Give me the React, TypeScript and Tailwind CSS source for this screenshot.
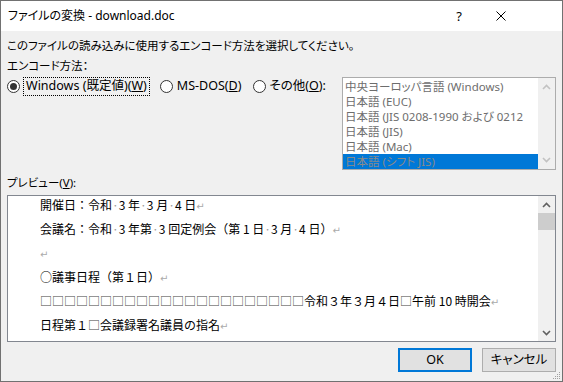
import React from 'react';

const ui = "font-['Noto_Sans','Noto_Sans_CJK_JP',sans-serif] [font-feature-settings:'palt']";

const Radio = ({ checked }: { checked?: boolean }) => (
  <span className="w-[13px] h-[13px] rounded-full border border-[#333] bg-white flex items-center justify-center shrink-0">
    {checked && <span className="w-[7px] h-[7px] rounded-full bg-[#333]"></span>}
  </span>
);

const Arrow = ({ up, color }: { up?: boolean; color: string }) => (
  <svg width="9" height="6" viewBox="0 0 9 6">
    <path d={up ? 'M1 5 L4.5 1.5 L8 5' : 'M1 1 L4.5 4.5 L8 1'} fill="none" stroke={color} strokeWidth="1.6" />
  </svg>
);

const encodings = [
  '中央ヨーロッパ言語 (Windows)',
  '日本語 (EUC)',
  '日本語 (JIS 0208-1990 および 0212',
  '日本語 (JIS)',
  '日本語 (Mac)',
  '日本語 (シフト JIS)',
];

const Dot = () => <span className="text-[#999]">·</span>;
const Ret = () => <span className="text-[#aaa] text-[10px] leading-none font-['DejaVu_Sans',sans-serif]">↵</span>;

export default function App() {
  return (
    <div className={`w-[563px] h-[382px] border border-[#717171] bg-[#f0f0f0] flex flex-col relative text-[12px] text-black ${ui}`}>
      {/* title bar */}
      <div className="h-[30px] bg-white flex items-center pl-[7px] shrink-0">
        <span className="text-[12px] leading-none">ファイルの変換 - download.doc</span>
        <span className="ml-auto mr-[34px] text-[13px] leading-none">?</span>
        <svg width="10" height="10" viewBox="0 0 10 10" className="mr-[56px]">
          <path d="M0.5 0.5 L9.5 9.5 M9.5 0.5 L0.5 9.5" stroke="#000" strokeWidth="1" />
        </svg>
      </div>

      <div className="px-[6px] flex flex-col">
        <div className="h-[20px] mt-[5px] flex items-center text-[11.5px]">このファイルの読み込みに使用するエンコード方法を選択してください。</div>
        <div className="h-[20px] flex items-center text-[11.5px]">エンコード方法：</div>

        <div className="flex items-start mt-[1px]">
          <div className="flex items-center h-[19px]">
            <Radio checked />
            <span className="ml-[3px] h-[19px] px-[2px] flex items-center border border-dotted border-black text-[12.5px]">
              Windows (既定値)(<u>W</u>)
            </span>
            <span className="ml-[10px]"><Radio /></span>
            <span className="ml-[4px] text-[12.5px]">MS-DOS(<u>D</u>)</span>
            <span className="ml-[12px]"><Radio /></span>
            <span className="ml-[3px] text-[12.5px]">その他(<u>O</u>):</span>
          </div>

          <div className="ml-auto w-[214px] h-[93px] border border-[#acacac] bg-white flex overflow-hidden">
            <div className="flex-1 flex flex-col overflow-hidden pt-[1px]">
              {encodings.map((e, i) => (
                <div
                  key={i}
                  className={`h-[15px] leading-[13px] flex items-center pl-[2px] whitespace-nowrap text-[11.5px] ${i === 5 ? 'bg-[#0078d7] text-[#8a8a8a]' : 'text-[#6d6d6d]'}`}
                >
                  {e}
                </div>
              ))}
            </div>
            <div className="w-[17px] bg-[#f0f0f0] flex flex-col items-center justify-between py-[6px]">
              <Arrow up color="#c2c2c2" />
              <Arrow color="#c2c2c2" />
            </div>
          </div>
        </div>

        <div className="h-[16px] mt-[5px] flex items-center text-[11.5px]">プレビュー(<u>V</u>):</div>

        <div className="mt-[4px] h-[147px] border border-[#828790] bg-white flex overflow-hidden">
          <div className="flex-1 pl-[32px] -mt-[3px] leading-[24px] whitespace-nowrap font-['Noto_Sans_CJK_JP',sans-serif] [font-feature-settings:normal] text-[12px]">
            <div>開催日：令和<Dot />3 年<Dot />3 月<Dot />4 日<Ret /></div>
            <div>会議名：令和<Dot />3 年第<Dot />3 回定例会（第 1 日<Dot />3 月<Dot />4 日）<Ret /></div>
            <div><Ret /></div>
            <div>○議事日程（第１日）<Ret /></div>
            <div>
              <span className="text-[#444]">□□□□□□□□□□□□□□□□□□□□□□</span>令和３年３月４日<span className="text-[#444]">□</span>午前 10 時開会<Ret />
            </div>
            <div>日程第１<span className="text-[#444]">□</span>会議録署名議員の指名<Ret /></div>
          </div>
          <div className="w-[17px] bg-[#f0f0f0] flex flex-col items-center">
            <div className="h-[17px] flex items-center justify-center"><Arrow up color="#606060" /></div>
            <div className="w-[17px] h-[17px] bg-[#cdcdcd]"></div>
            <div className="flex-1"></div>
            <div className="h-[17px] flex items-center justify-center"><Arrow color="#606060" /></div>
          </div>
        </div>

        <div className="flex justify-end gap-[10px] mt-[6px]">
          <button className="w-[74px] h-[24px] border-2 border-[#0078d7] bg-[#e1e1e1] text-[12.5px] flex items-center justify-center">OK</button>
          <button className="w-[74px] h-[24px] border border-[#adadad] bg-[#e1e1e1] text-[12.5px] flex items-center justify-center">キャンセル</button>
        </div>
      </div>

      <svg width="10" height="10" viewBox="0 0 10 10" className="absolute right-[1px] bottom-[1px]">
        <g fill="#a0a0a0">
          <rect x="8" y="2" width="1" height="1" />
          <rect x="6" y="4" width="1" height="1" />
          <rect x="8" y="4" width="1" height="1" />
          <rect x="4" y="6" width="1" height="1" />
          <rect x="6" y="6" width="1" height="1" />
          <rect x="8" y="6" width="1" height="1" />
          <rect x="2" y="8" width="1" height="1" />
          <rect x="4" y="8" width="1" height="1" />
          <rect x="6" y="8" width="1" height="1" />
          <rect x="8" y="8" width="1" height="1" />
        </g>
      </svg>
    </div>
  );
}
